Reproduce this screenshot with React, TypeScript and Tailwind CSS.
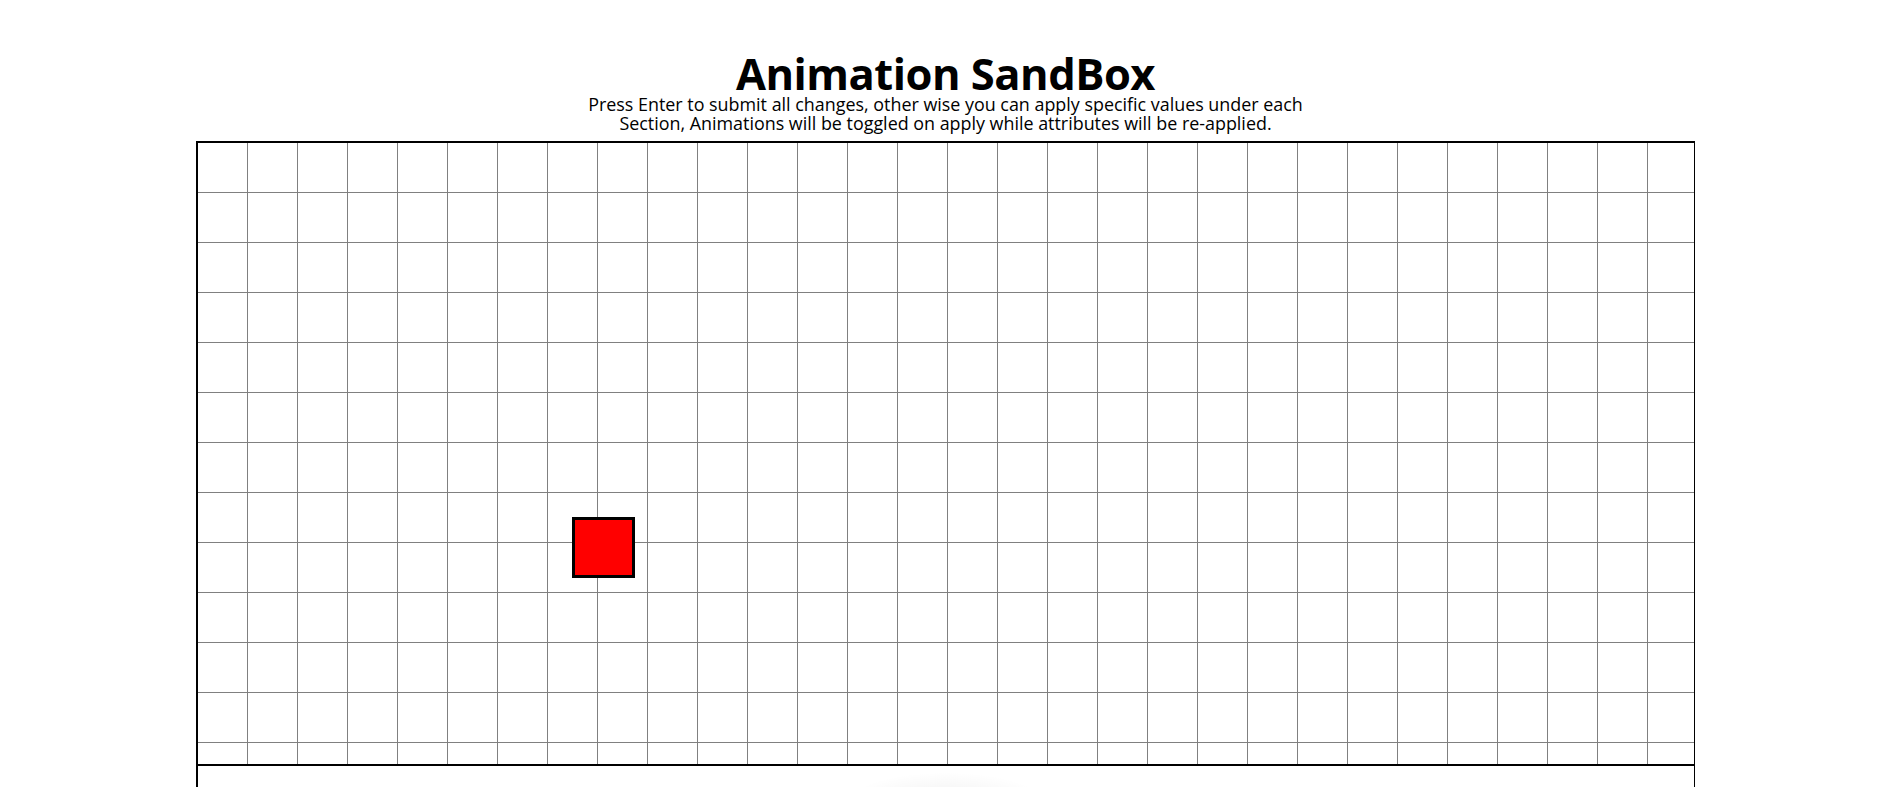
const COLS = 30;
const ROWS = 13;

function Cell() {
  return <div className="h-[50px] w-[50px] shrink-0 border-b border-r border-[#808080]" />;
}

export default function App() {
  return (
    <div className="min-h-screen bg-white font-['Open_Sans',sans-serif] text-black">
      <div className="ml-[196px] w-[1499px]">
        {/* Header */}

        <div className="flex flex-col items-center pt-[52px]">
          <h1 className="text-[43.5px] font-bold leading-[43px] tracking-[-0.5px]">
            Animation SandBox
          </h1>
          <p className="text-center text-[17.9px] leading-[19px]">
            Press Enter to submit all changes, other wise you can apply specific values under each
            <br />
            Section, Animations will be toggled on apply while attributes will be re-applied.
          </p>
        </div>

        {/* Sandbox */}

        <div className="mt-[8px] border-2 border-r border-black">
          <div className="relative h-[623px] overflow-hidden border-b-2 border-black">
            {Array.from({ length: ROWS }).map((_, r) => (
              <div key={r} className="flex">
                {Array.from({ length: COLS }).map((_, c) => (
                  <Cell key={c} />
                ))}
              </div>
            ))}

            <div className="absolute left-[374px] top-[374px] h-[61px] w-[63px] border-[3px] border-black bg-[#ff0000]" />
          </div>

          <div className="flex h-[200px] justify-center pt-[6px]">
            <div className="h-[60px] w-[200px] bg-[radial-gradient(ellipse_at_center,rgba(0,0,0,0.06),transparent_70%)]" />
          </div>
        </div>
      </div>
    </div>
  );
}
